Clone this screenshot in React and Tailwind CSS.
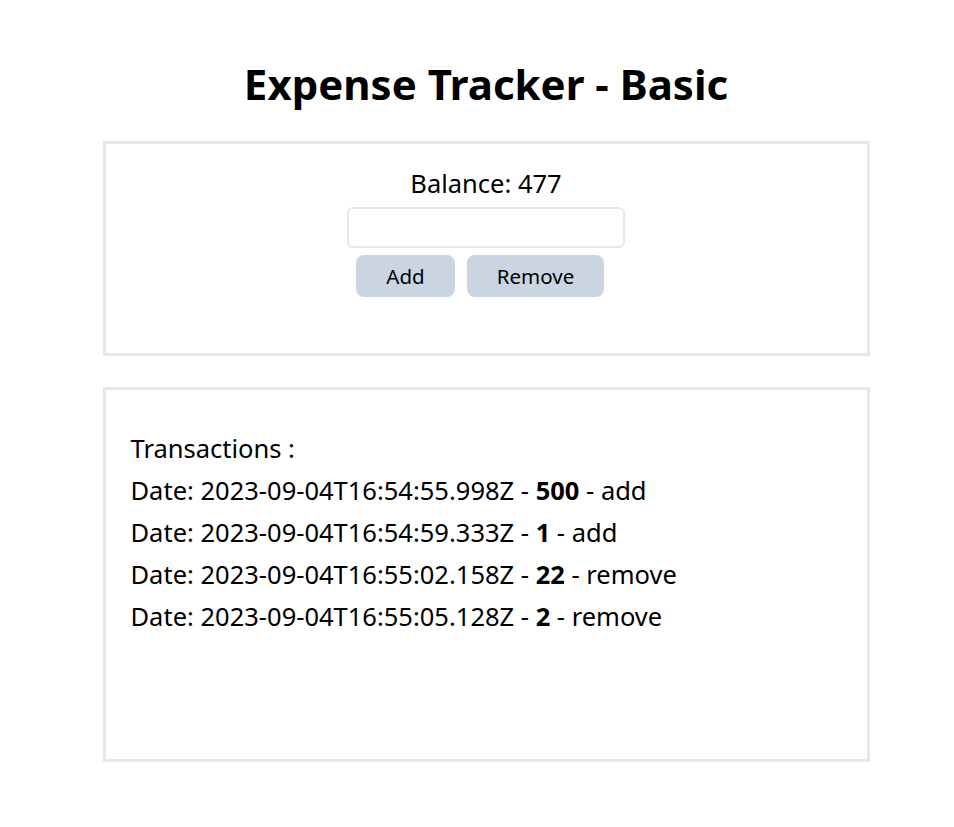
import React from 'react';

const transactions = [
    { date: '2023-09-04T16:54:55.998Z', amount: 500, type: 'add' },
    { date: '2023-09-04T16:54:59.333Z', amount: 1, type: 'add' },
    { date: '2023-09-04T16:55:02.158Z', amount: 22, type: 'remove' },
    { date: '2023-09-04T16:55:05.128Z', amount: 2, type: 'remove' },
];

const App = () => {
    return (
        <div className="min-h-screen bg-white text-black pl-[18px] pt-[54px]" style={{ fontFamily: '"Noto Sans", "Open Sans", sans-serif' }}>
            <div className="w-[767px] mx-auto flex flex-col">
                <h1 className="text-center text-[42px] font-bold leading-[60px]">Expense Tracker - Basic</h1>

                {/* Balance card */}
                <div className="mt-[27px] h-[215px] border-[3px] border-[#e5e7eb] flex flex-col items-center pt-[23px]">
                    <p className="text-[25.5px] leading-[32px]">Balance: 477</p>
                    <input type="number" className="mt-[8px] w-[278px] h-[41px] border-2 border-[#e2e8f0] rounded-md outline-none px-2" />
                    <div className="mt-[7px] mr-[12px] flex gap-[12px]">
                        <button className="w-[99px] h-[42px] bg-[#cbd5e1] rounded-lg text-[20.5px]">Add</button>
                        <button className="w-[137px] h-[42px] bg-[#cbd5e1] rounded-lg text-[20.5px]">Remove</button>
                    </div>
                </div>

                {/* Transactions card */}
                <div className="mt-[31px] h-[375px] border-[3px] border-[#e5e7eb] px-[25px] pt-[37px]">
                    <p className="text-[25.5px] leading-[42px]">Transactions :</p>
                    {transactions.map((t, i) => (
                        <p key={i} className="text-[25.5px] leading-[42px]">
                            Date: {t.date} - <span className="font-bold">{t.amount}</span> - {t.type}
                        </p>
                    ))}
                </div>
            </div>
        </div>
    );
};

export default App;
